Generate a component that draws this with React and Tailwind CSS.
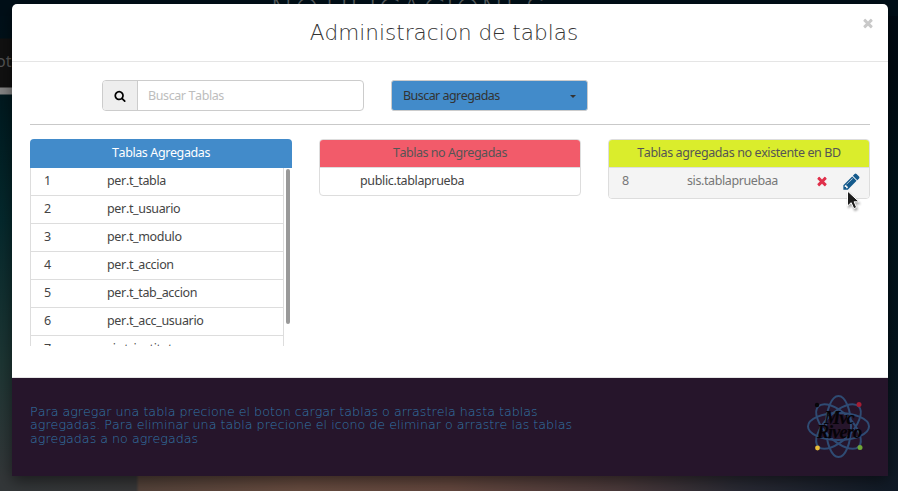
import React from "react";

const TIMES =
  "M1490 1322q0 40-28 68l-136 136q-28 28-68 28t-68-28l-294-294-294 294q-28 28-68 28t-68-28l-136-136q-28-28-28-68t28-68l294-294-294-294q-28-28-28-68t28-68l136-136q28-28 68-28t68 28l294 294 294-294q28-28 68-28t68 28l136 136q28 28 28 68t-28 68l-294 294 294 294q28 28 28 68z";
const SEARCH =
  "M1216 832q0-185-131.5-316.5t-316.5-131.5-316.5 131.5-131.5 316.5 131.5 316.5 316.5 131.5 316.5-131.5 131.5-316.5zm512 832q0 52-38 90t-90 38q-54 0-90-38l-343-342q-179 124-399 124-143 0-273.5-55.5t-225-150-150-225-55.5-273.5 55.5-273.5 150-225 225-150 273.5-55.5 273.5 55.5 225 150 150 225 55.5 273.5q0 220-124 399l343 343q37 37 37 90z";
const PENCIL =
  "M491 1536l91-91-235-235-91 91v107h128v128h107zm523-928q0-22-22-22-10 0-17 7l-542 542q-7 7-7 17 0 22 22 22 10 0 17-7l542-542q7-7 7-17zm-54-192l416 416-832 832h-416v-416zm683 96q0 53-37 90l-166 166-416-416 166-165q36-38 90-38 53 0 91 38l235 234q37 39 37 91z";

function Icon({ d, className }) {
  return (
    <svg viewBox="0 0 1792 1792" fill="currentColor" className={className}>
      <path d={d} />
    </svg>
  );
}

const rows = [
  ["1", "per.t_tabla"],
  ["2", "per.t_usuario"],
  ["3", "per.t_modulo"],
  ["4", "per.t_accion"],
  ["5", "per.t_tab_accion"],
  ["6", "per.t_acc_usuario"],
  ["7", "sis.t_institut"],
];

function Logo() {
  return (
    <div className="relative h-16 w-16">
      <svg viewBox="0 0 64 64" className="h-16 w-16" fill="none" stroke="#2f4b73" strokeWidth="2">
        <ellipse cx="31.500" cy="32.500" rx="12.5" ry="30.5" />
        <ellipse cx="31.500" cy="32.500" rx="30.5" ry="13.5" />
        <ellipse cx="31.500" cy="32.500" rx="28.500" ry="13.5" transform="rotate(45 31.5 32.5)" />
        <ellipse cx="31.500" cy="32.500" rx="28.500" ry="13.5" transform="rotate(-45 31.5 32.5)" />
        <g stroke="none">
          <circle cx="10" cy="11" r="2.200" fill="#08060a" />
          <circle cx="52" cy="10.500" r="2.500" fill="#a51d33" />
          <circle cx="10.500" cy="54" r="2.400" fill="#e9bd38" />
          <circle cx="53" cy="53.500" r="2.500" fill="#70a637" />
        </g>
      </svg>
      <div className="absolute inset-x-0 top-[17px] text-center font-['Liberation_Serif',serif] text-[18px] leading-[14px] font-bold tracking-[-0.800px] text-[#050307] italic [-webkit-text-stroke:0.2px_#050307]">
        Mvc
        <br />
        Rivero
      </div>
    </div>
  );
}

export default function App() {
  return (
    <div className="relative flex h-[491px] w-[898px] overflow-hidden bg-[linear-gradient(to_right,#333739_0,#383839_136px,#56443b_139px,#684c40_300px,#65483f_450px,#4b3a3b_620px,#292a34_740px,#101a26_898px)] font-['Noto_Sans',sans-serif] text-[12.500px] tracking-[-0.400px] text-[#444] [font-kerning:none]">
      <div className="absolute top-0 left-0 h-[476px] w-3 bg-[linear-gradient(to_bottom,#000f19_0,#001119_38px,#111_39px,#111_87px,#858585_88px,#858585_94px,#00191f_95px,#05292d_220px,#1d3634_360px,#333739_476px)]" />
      <div className="absolute top-0 right-0 h-[476px] w-[10px] bg-[linear-gradient(to_bottom,#000b14_0,#000a12_70px,#00121a_190px,#04141d_350px,#101a26_476px)]" />
      <div className="absolute top-0 left-0 h-4 w-full bg-[#000f18]" />
      <div className="absolute top-[-6px] left-[270px] font-['DejaVu_Sans_Light','DejaVu_Sans',sans-serif] text-[32px] leading-8 font-extralight tracking-[0.300px] text-[#5b6063]">
        NOTIFICACIONES
      </div>
      <div className="absolute top-[52px] left-[-4px] text-[16px] leading-[18px] tracking-normal text-[#555]">ot</div>

      <main className="relative mx-3 mt-1 flex h-[472px] w-[876px] flex-col rounded-t-[5px] bg-white shadow-[0_5px_15px_rgba(0,0,0,0.5)]">
        <header className="relative flex h-[58px] shrink-0 items-center justify-center border-b border-[#e5e5e5]">
          <h1 className="mr-[12px] font-['DejaVu_Sans_Light','DejaVu_Sans',sans-serif] text-[21.600px] leading-6 font-extralight tracking-normal whitespace-nowrap text-[#333]">
            Administracion de tablas
          </h1>
          <button className="absolute top-[12px] right-[13px] text-[#c9c9c9]" aria-label="Cerrar">
            <Icon d={TIMES} className="h-[14px] w-[14px]" />
          </button>
        </header>

        <section className="flex h-[315px] shrink-0 flex-col px-[18px] pt-[18px]">
          <div className="flex h-[45px] gap-[27px] border-b border-[#c9c9c9] pl-[72px]">
            <div className="flex h-[31px] w-[262px] overflow-hidden rounded-[4px] border border-[#ccc]">
              <span className="flex w-[35px] items-center justify-center border-r border-[#ccc] bg-[#eee] text-black">
                <Icon d={SEARCH} className="h-3 w-3" />
              </span>
              <span className="flex items-center pt-px pl-[10px] text-[#bdbdbd]">Buscar Tablas</span>
            </div>
            <div className="flex h-[31px] w-[197px] items-center justify-between rounded-[3px] border border-[#ccc] bg-[#428bca] pt-px pr-[11px] pl-[11px] text-[#333]">
              <span className="tracking-[-0.550px]">Buscar agregadas</span>
              <span className="border-x-[3px] border-t-[3px] border-x-transparent border-t-[#333]" />
            </div>
          </div>

          <div className="mt-[14px] flex items-start gap-[27px]">
            <div className="w-[262px]">
              <div className="flex h-[29px] items-center justify-center rounded-t-[4px] bg-[#428bca] pb-px text-white">
                Tablas Agregadas
              </div>
              <div className="flex h-[178px] overflow-hidden">
                <div className="h-[196px] w-[254px] border-x border-[#ddd]">
                  {rows.map(([n, name]) => (
                    <div key={n} className="flex h-[28px] items-center border-b border-[#ddd] pl-[13px]">
                      <span className="w-[63px]">{n}</span>
                      <span className="tracking-[-0.340px]">{name}</span>
                    </div>
                  ))}
                </div>
                <div className="mt-px ml-[2px] h-[155px] w-1 rounded-[2px] bg-[#999]" />
              </div>
            </div>

            <div className="w-[262px] overflow-hidden rounded-[4px] border border-[#ddd]">
              <div className="flex h-[28px] items-center justify-center border-b border-[#ddd] bg-[#f25b6a] pb-px tracking-[-0.480px] text-[#555]">
                Tablas no Agregadas
              </div>
              <div className="flex h-[27px] items-center pb-px pl-[40px] tracking-[-0.360px]">public.tablaprueba</div>
            </div>

            <div className="w-[262px] overflow-hidden rounded-[4px] border border-[#ddd]">
              <div className="flex h-[28px] items-center justify-center border-b border-[#ddd] bg-[#daed2c] pb-px text-[#555]">
                Tablas agregadas no existente en BD
              </div>
              <div className="flex h-[30px] items-center bg-[#f4f4f4] pb-[3px] pl-[13px] text-[#777]">
                <span className="w-[65px]">8</span>
                <span className="w-[128px]">sis.tablapruebaa</span>
                <Icon d={TIMES} className="mb-[2px] h-[14px] w-[14px] text-[#e0304b]" />
                <Icon d={PENCIL} className="ml-[13px] h-[19px] w-[19px] text-[#145a8c]" />
              </div>
            </div>
          </div>
        </section>

        <footer className="flex flex-1 items-start justify-between border-t border-[#e5e5e5] bg-[#26152b] pr-[17px] pl-[18px]">
          <p className="pt-[27px] font-['DejaVu_Sans_Light','DejaVu_Sans',sans-serif] text-[12.700px] leading-[13.300px] font-extralight tracking-normal whitespace-nowrap text-[#3277a8]">
            Para agregar una tabla precione el boton cargar tablas o arrastrela hasta tablas
            <br />
            agregadas. Para eliminar una tabla precione el icono de eliminar o arrastre las tablas
            <br />
            agregadas a no agregadas
          </p>
          <div className="pt-[16px]">
            <Logo />
          </div>
        </footer>
      </main>

      <svg viewBox="0 0 14 20" className="absolute top-[190px] left-[846px] h-5 w-[14px] drop-shadow-[1px_2px_1px_rgba(0,0,0,0.35)]">
        <path d="M1.500 1v15l3.700-3.300 2.600 6 2.800-1.300-2.500-5.600h5z" fill="#1c1c1c" stroke="#fff" strokeWidth="1" />
      </svg>
    </div>
  );
}
